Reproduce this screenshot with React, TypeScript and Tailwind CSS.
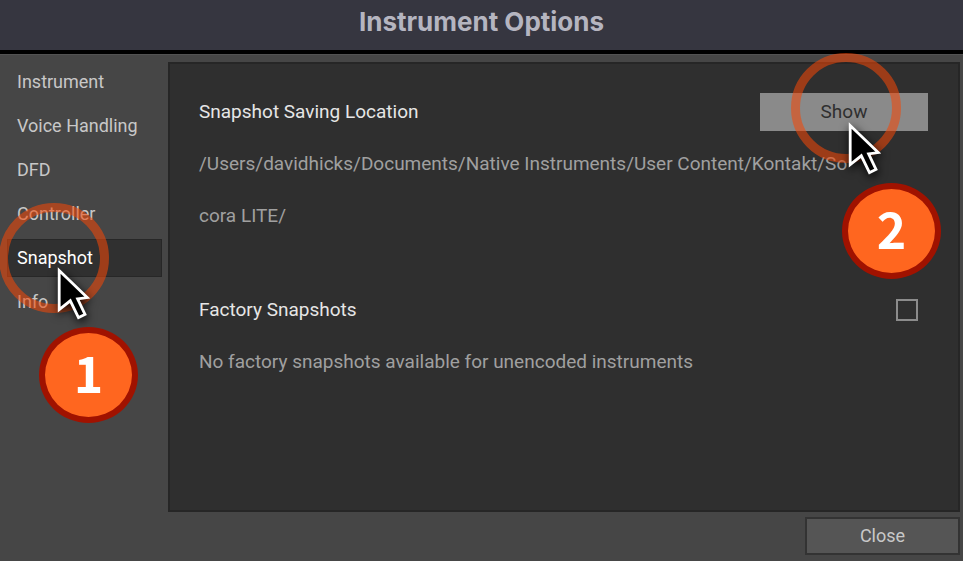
import React, { useState } from "react";
import { clsx } from "clsx";

const pages = ["Instrument", "Voice Handling", "DFD", "Controller", "Snapshot", "Info"];

type MarkProps = { className: string };

// Translucent ring around the control to click
const Ring: React.FC<MarkProps> = ({ className }) => (
  <span
    className={clsx(
      "pointer-events-none absolute z-10 size-[110px] rounded-full border-9 border-[#f54708]/56",
      className
    )}
  />
);

const Pointer: React.FC<MarkProps> = ({ className }) => (
  <svg
    viewBox="0 0 50 66"
    className={clsx(
      "pointer-events-none absolute z-10 h-[66px] w-[50px] overflow-visible drop-shadow-[1px_3px_5px_rgba(0,0,0,0.9)]",
      className
    )}
    aria-hidden="true"
  >
    <path
      d="M10.200 10.600 V49.600 L21.300 40.800 L29.500 57.600 L36 54.400 L28.600 38.900 L38.200 37.600 Z"
      fill="#000"
      stroke="#fff"
      strokeWidth="2.800"
    />
  </svg>
);

const StepBadge: React.FC<MarkProps & { step: number }> = ({ step, className }) => (
  <span
    className={clsx(
      "pointer-events-none absolute z-10 flex h-24 w-[99px] items-center justify-center rounded-[50%] border-6 border-[#a01200] bg-[#ff661f] pb-2 font-['Noto_Sans_CJK_SC',sans-serif] text-[50px] font-bold leading-none text-white",
      className
    )}
  >
    {step}
  </span>
);

const App: React.FC = () => {
  const [page, setPage] = useState("Snapshot");
  const [factory, setFactory] = useState(false);

  return (
    <div className="flex min-h-screen flex-col overflow-hidden bg-[#464646] font-[Roboto,sans-serif] text-[19px] leading-6 text-[#c8c8c8]">
      <header className="border-b-4 border-black bg-[#363640] pt-[5px] pb-[11px] text-center">
        <h1 className="font-[Inter,sans-serif] text-[26px] font-bold leading-[34px] text-[#b5b5c0]">
          Instrument Options
        </h1>
      </header>

      <div className="flex grow border-t border-[#525252] pt-[7px] pr-[3px]">
        <nav className="flex w-[168px] shrink-0 flex-col gap-[6px] pt-px pr-[6px] pl-[7px] text-lg">
          {pages.map((name) => (
            <div key={name} className="relative">
              <button
                onClick={() => setPage(name)}
                className={clsx(
                  "block h-[38px] w-full border px-[9px] text-left whitespace-nowrap",
                  page === name
                    ? "border-[#272727] bg-[#303030] text-white"
                    : "border-transparent"
                )}
              >
                {name}
              </button>
              {name === "Snapshot" && (
                <>
                  <Ring className="-top-9 -left-2" />
                  <Pointer className="top-[21px] left-[42px]" />
                  <StepBadge step={1} className="top-[88px] left-8" />
                </>
              )}
            </div>
          ))}
        </nav>

        <main className="min-w-0 grow border-2 border-[#262626] bg-[#2f2f2f] pt-[29px] pr-[30px] pl-[29px]">
          <section>
            <div className="flex items-center justify-between">
              <h2 className="text-[#e6e6e6]">Snapshot Saving Location</h2>
              <div className="relative">
                <button className="block h-[38px] w-[168px] bg-[#8a8a8a] text-[#2f2f2f]">Show</button>
                <Ring className="-top-10 left-[31px]" />
                <Pointer className="top-[22px] left-[80px]" />
                <StepBadge step={2} className="top-[90px] left-[82px]" />
              </div>
            </div>
            <p className="mt-[7px] leading-[52px] whitespace-nowrap text-[#a0a0a0]">
              /Users/davidhicks/Documents/Native Instruments/User Content/Kontakt/So
              <br />
              cora LITE/
            </p>
          </section>

          <section className="mt-14">
            <div className="flex items-center justify-between pr-[10px]">
              <label htmlFor="factory" className="text-[#e6e6e6]">
                Factory Snapshots
              </label>
              <input
                id="factory"
                type="checkbox"
                checked={factory}
                onChange={(e) => setFactory(e.target.checked)}
                className="size-[22px] appearance-none border-2 border-[#8c8c8c] checked:bg-[#8c8c8c]"
              />
            </div>
            <p className="mt-7 text-[#a0a0a0]">
              No factory snapshots available for unencoded instruments
            </p>
          </section>
        </main>
      </div>

      <footer className="flex justify-end pt-[5px] pr-[3px] pb-[6px]">
        <button className="h-[38px] w-[155px] border-2 border-[#333333] bg-[#555555] text-lg">Close</button>
      </footer>
    </div>
  );
};

export default App;
